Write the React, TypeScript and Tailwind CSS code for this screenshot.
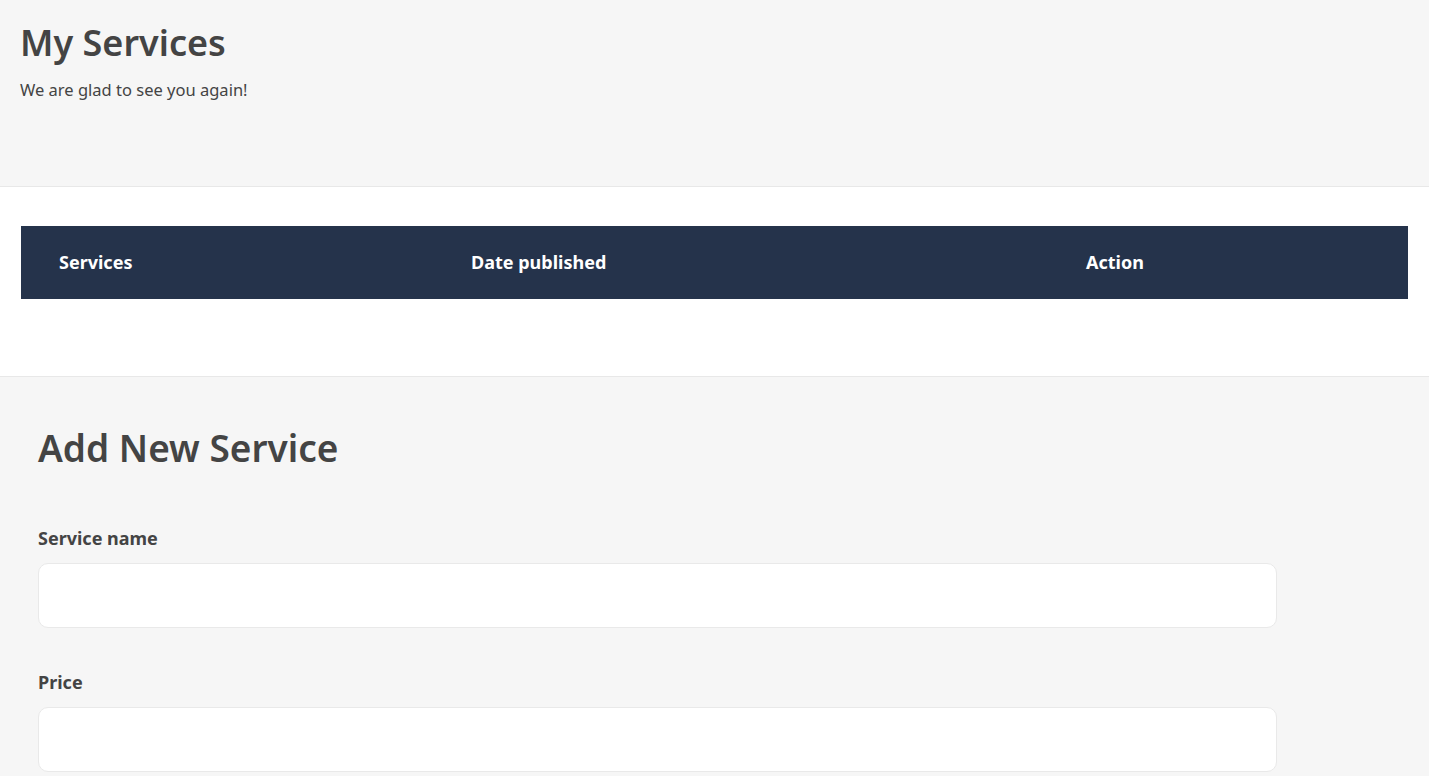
import React from "react";

const columns = [
  { label: "Services", cls: "w-[412px]" },
  { label: "Date published", cls: "w-[615px]" },
  { label: "Action", cls: "" },
];

const Field = ({ label }: { label: string }) => (
  <div className="flex flex-col">
    <label className="text-[18px] font-bold text-[#444] leading-[24px]">{label}</label>
    <input
      type="text"
      className="mt-[13px] h-[65px] w-[1239px] rounded-[10px] border border-[#e9e9e9] bg-white px-4 focus:outline-none"
    />
  </div>
);

export default function App() {
  return (
    <div className="min-h-screen bg-[#f6f6f6] font-['Noto_Sans',sans-serif] text-[#444]">
      <section className="h-[187px] border-b border-[#e8e8e8] px-[20px] pt-[20px]">
        <h1 className="text-[36px] font-semibold leading-[46px] text-[#444]">My Services</h1>
        <p className="mt-[12px] text-[16.5px] leading-[24px] text-[#444]">We are glad to see you again!</p>
      </section>

      <section className="h-[190px] border-b border-[#e8e8e8] bg-white px-[21px] pt-[39px]">
        <table className="w-[1387px] bg-[#25334b] text-white">
          <thead>
            <tr className="h-[73px]">
              {columns.map((c) => (
                <th key={c.label} className={`px-[38px] text-left text-[18px] font-bold ${c.cls}`}>
                  {c.label}
                </th>
              ))}
            </tr>
          </thead>
        </table>
      </section>

      <section className="px-[38px] pt-[48px]">
        <h2 className="text-[37px] font-semibold leading-[46px] text-[#444]">Add New Service</h2>
        <div className="mt-[55px] flex flex-col gap-[42px]">
          <Field label="Service name" />
          <Field label="Price" />
        </div>
      </section>
    </div>
  );
}
